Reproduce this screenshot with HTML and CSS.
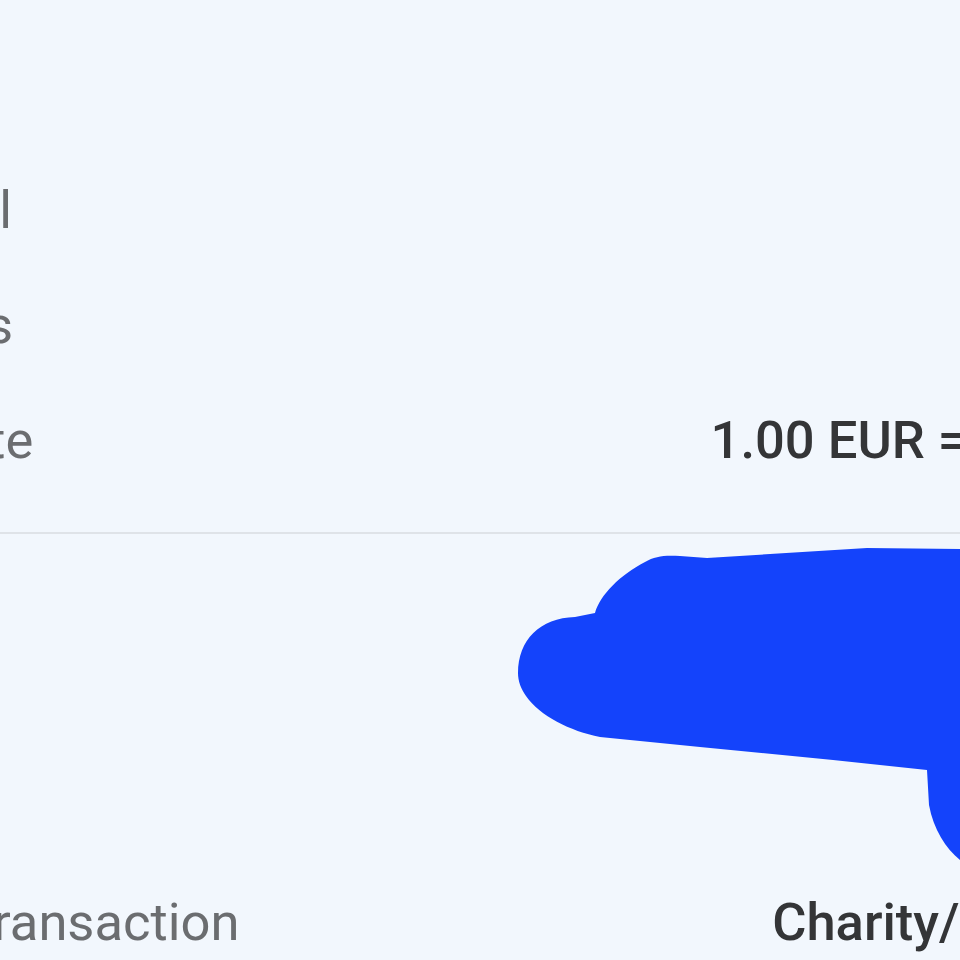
FILE: index.html
```html
<!DOCTYPE html>
<html lang="en">
<head>
<meta charset="utf-8">
<title>Transaction details</title>
<link rel="stylesheet" href="styles.css">
</head>
<body>
<main class="sheet">
  <section class="group">
    <div class="row"><span class="label">Paid total</span><span class="value"></span></div>
    <div class="row"><span class="label">Card fees</span><span class="value"></span></div>
    <div class="row"><span class="label">Quote rate</span><span class="value">1.00 EUR = 1.08 USD</span></div>
  </section>
  <hr class="divider">
  <section class="redacted" aria-label="Redacted">
    <svg class="scribble" width="680" height="320" viewBox="518 545 680 320" aria-hidden="true">
      <path d="M518 673 C518 640 540 618 575 617 L595 613 C600 595 620 575 645 562 C655 556 665 555 680 556 L707 558 L867 548 L1198 552 L1198 870 L975 870 C955 860 935 838 929 805 L927 770 L833 760 L700 747 L600 737 C570 731 540 716 526 696 C521 689 518 681 518 673 Z" fill="#1443fb"/>
    </svg>
  </section>
  <section class="group">
    <div class="row"><span class="label">Type of transaction</span><span class="value">Charity/Donations</span></div>
  </section>
</main>
</body>
</html>
```
FILE: styles.css
```css
html, body {
  margin: 0;
  padding: 0;
  background: #f2f7fd;
  overflow: hidden;
}
body {
  width: 960px;
  height: 960px;
  font-family: Roboto, "Noto Sans", "Liberation Sans", sans-serif;
}
.sheet {
  margin-left: -210px;
  width: 1408px;
  padding-top: 153px;
}
.group {
  display: flex;
  flex-direction: column;
}
.row {
  display: flex;
  justify-content: space-between;
  align-items: baseline;
  height: 115px;
  line-height: 115px;
  font-size: 52.5px;
  white-space: nowrap;
}
.label {
  color: #6b6d70;
  font-weight: 400;
}
.value {
  color: #343537;
  font-weight: 500;
}
.divider {
  margin: 34px 0 0 0;
  border: 0;
  height: 2px;
  background: #dfe3e8;
}
.redacted {
  height: 331px;
  padding-left: 728px;
  box-sizing: border-box;
  padding-top: 11px;
}
.scribble {
  display: block;
}
```
